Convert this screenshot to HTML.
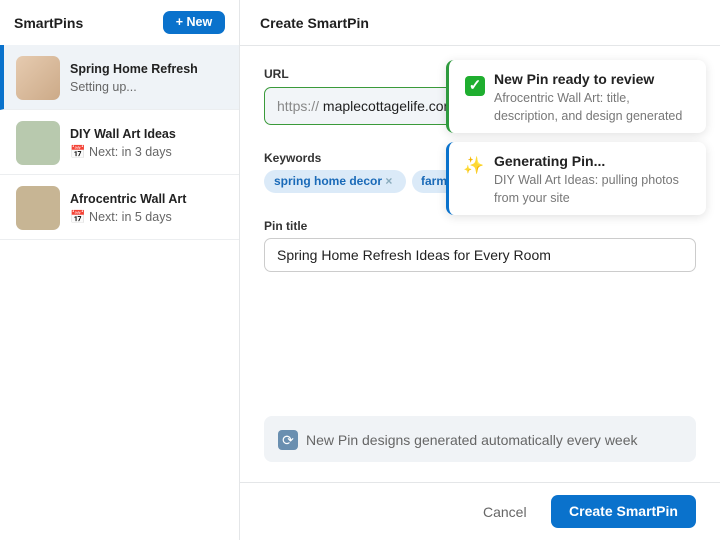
<!DOCTYPE html><html><head><style>
*{box-sizing:border-box;margin:0;padding:0}
body{width:720px;height:540px;overflow:hidden;font-family:"Liberation Sans",sans-serif;background:#fff;position:relative;color:#1f1f1f}
.abs{position:absolute}
.side{left:0;top:0;width:240px;height:540px;border-right:1px solid #e4e6e8}
.item{position:absolute;left:0;width:239px;height:65px;border-bottom:1px solid #eceef0}
.thumb{position:absolute;left:16px;top:11px;width:44px;height:44px;border-radius:7px}
.t1{position:absolute;left:70px;top:17px;font-size:12.5px;font-weight:bold;color:#222}
.t2{position:absolute;left:70px;top:35px;font-size:12.5px;color:#666}
.lbl{position:absolute;left:264px;font-size:12px;font-weight:bold;color:#333}
.toast{position:absolute;left:446px;width:260px;height:73px;background:#fff;border-radius:8px;box-shadow:0 2px 10px rgba(0,0,0,.12)}
.toast b{position:absolute;left:45px;top:11px;font-size:14px;color:#222}
.toast span{position:absolute;left:45px;top:29px;font-size:12.5px;color:#777;line-height:18px;width:200px}
</style></head><body>
<div class="abs side">
 <div class="abs" style="left:14px;top:15px;font-size:14px;font-weight:bold">SmartPins</div>
 <div class="abs" style="left:163px;top:11px;width:62px;height:23px;background:#0a72cc;border-radius:7px;color:#fff;font-size:12.5px;font-weight:bold;text-align:center;line-height:23px">+ New</div>
 <div class="abs" style="left:0;top:45px;width:239px;border-top:1px solid #e4e6e8"></div>
 <div class="item" style="top:45px;background:#eff3f7;border-left:4px solid #0a72cc"><div class="thumb" style="left:12px;background:linear-gradient(135deg,#e6cbb0,#ccaa88)"></div><div class="t1" style="left:66px">Spring Home Refresh</div><div class="t2" style="left:66px">Setting up...</div></div>
 <div class="item" style="top:110px"><div class="thumb" style="background:#b8c9ae"></div><div class="t1">DIY Wall Art Ideas</div><div class="t2">📅 Next: in 3 days</div></div>
 <div class="item" style="top:175px"><div class="thumb" style="background:#c7b594"></div><div class="t1">Afrocentric Wall Art</div><div class="t2">📅 Next: in 5 days</div></div>
</div>
<div class="abs" style="left:260px;top:15px;font-size:14px;font-weight:bold">Create SmartPin</div>
<div class="abs" style="left:240px;top:45px;width:480px;border-top:1px solid #e4e6e8"></div>
<div class="lbl" style="top:67px">URL</div>
<div class="abs" style="left:264px;top:87px;width:200px;height:38px;border:1px solid #3a9a3a;border-radius:7px;background:#f2f5f8;font-size:14px;line-height:36px;padding-left:12px;white-space:nowrap;overflow:hidden"><span style="color:#888">https://</span> maplecottagelife.com</div>
<div class="lbl" style="top:151px">Keywords</div>
<div class="abs" style="left:264px;top:170px;width:142px;height:23px;background:#dbeaf8;border-radius:12px;color:#1a6ab8;font-size:12px;font-weight:bold;line-height:23px;padding-left:10px">spring home decor <span style="color:#8ab">×</span></div>
<div class="abs" style="left:412px;top:170px;width:40px;height:23px;background:#dbeaf8;border-radius:12px 0 0 12px;color:#1a6ab8;font-size:12px;font-weight:bold;line-height:23px;padding-left:9px;overflow:hidden">farm</div>
<div class="lbl" style="top:219px">Pin title</div>
<div class="abs" style="left:264px;top:238px;width:432px;height:34px;border:1px solid #ccc;border-radius:7px;font-size:14px;line-height:32px;padding-left:12px;color:#222">Spring Home Refresh Ideas for Every Room</div>
<div class="abs" style="left:264px;top:416px;width:432px;height:46px;background:#f0f3f6;border-radius:8px"></div>
<div class="abs" style="left:278px;top:430px;width:20px;height:20px;border-radius:4px;background:#6a8fb0;color:#fff;font-size:14px;text-align:center;line-height:20px">⟳</div>
<div class="abs" style="left:306px;top:432px;font-size:14px;color:#666">New Pin designs generated automatically every week</div>
<div class="abs" style="left:240px;top:482px;width:480px;border-top:1px solid #e4e6e8"></div>
<div class="abs" style="left:483px;top:504px;font-size:14px;color:#666">Cancel</div>
<div class="abs" style="left:551px;top:495px;width:145px;height:33px;background:#0a72cc;border-radius:7px;color:#fff;font-size:14px;font-weight:bold;text-align:center;line-height:33px">Create SmartPin</div>
<div class="toast" style="top:60px;border-left:3px solid #2e9a3e"><div class="abs" style="left:16px;top:16px;width:20px;height:20px;background:#1fae2f;border-radius:4px;color:#fff;font-size:15px;font-weight:bold;text-align:center;line-height:20px">✓</div><b>New Pin ready to review</b><span>Afrocentric Wall Art: title, description, and design generated</span></div>
<div class="toast" style="top:142px;border-left:3px solid #0a72cc"><div class="abs" style="left:14px;top:14px;font-size:17px;color:#f5c542">✨</div><b>Generating Pin...</b><span>DIY Wall Art Ideas: pulling photos from your site</span></div>
</body></html>
